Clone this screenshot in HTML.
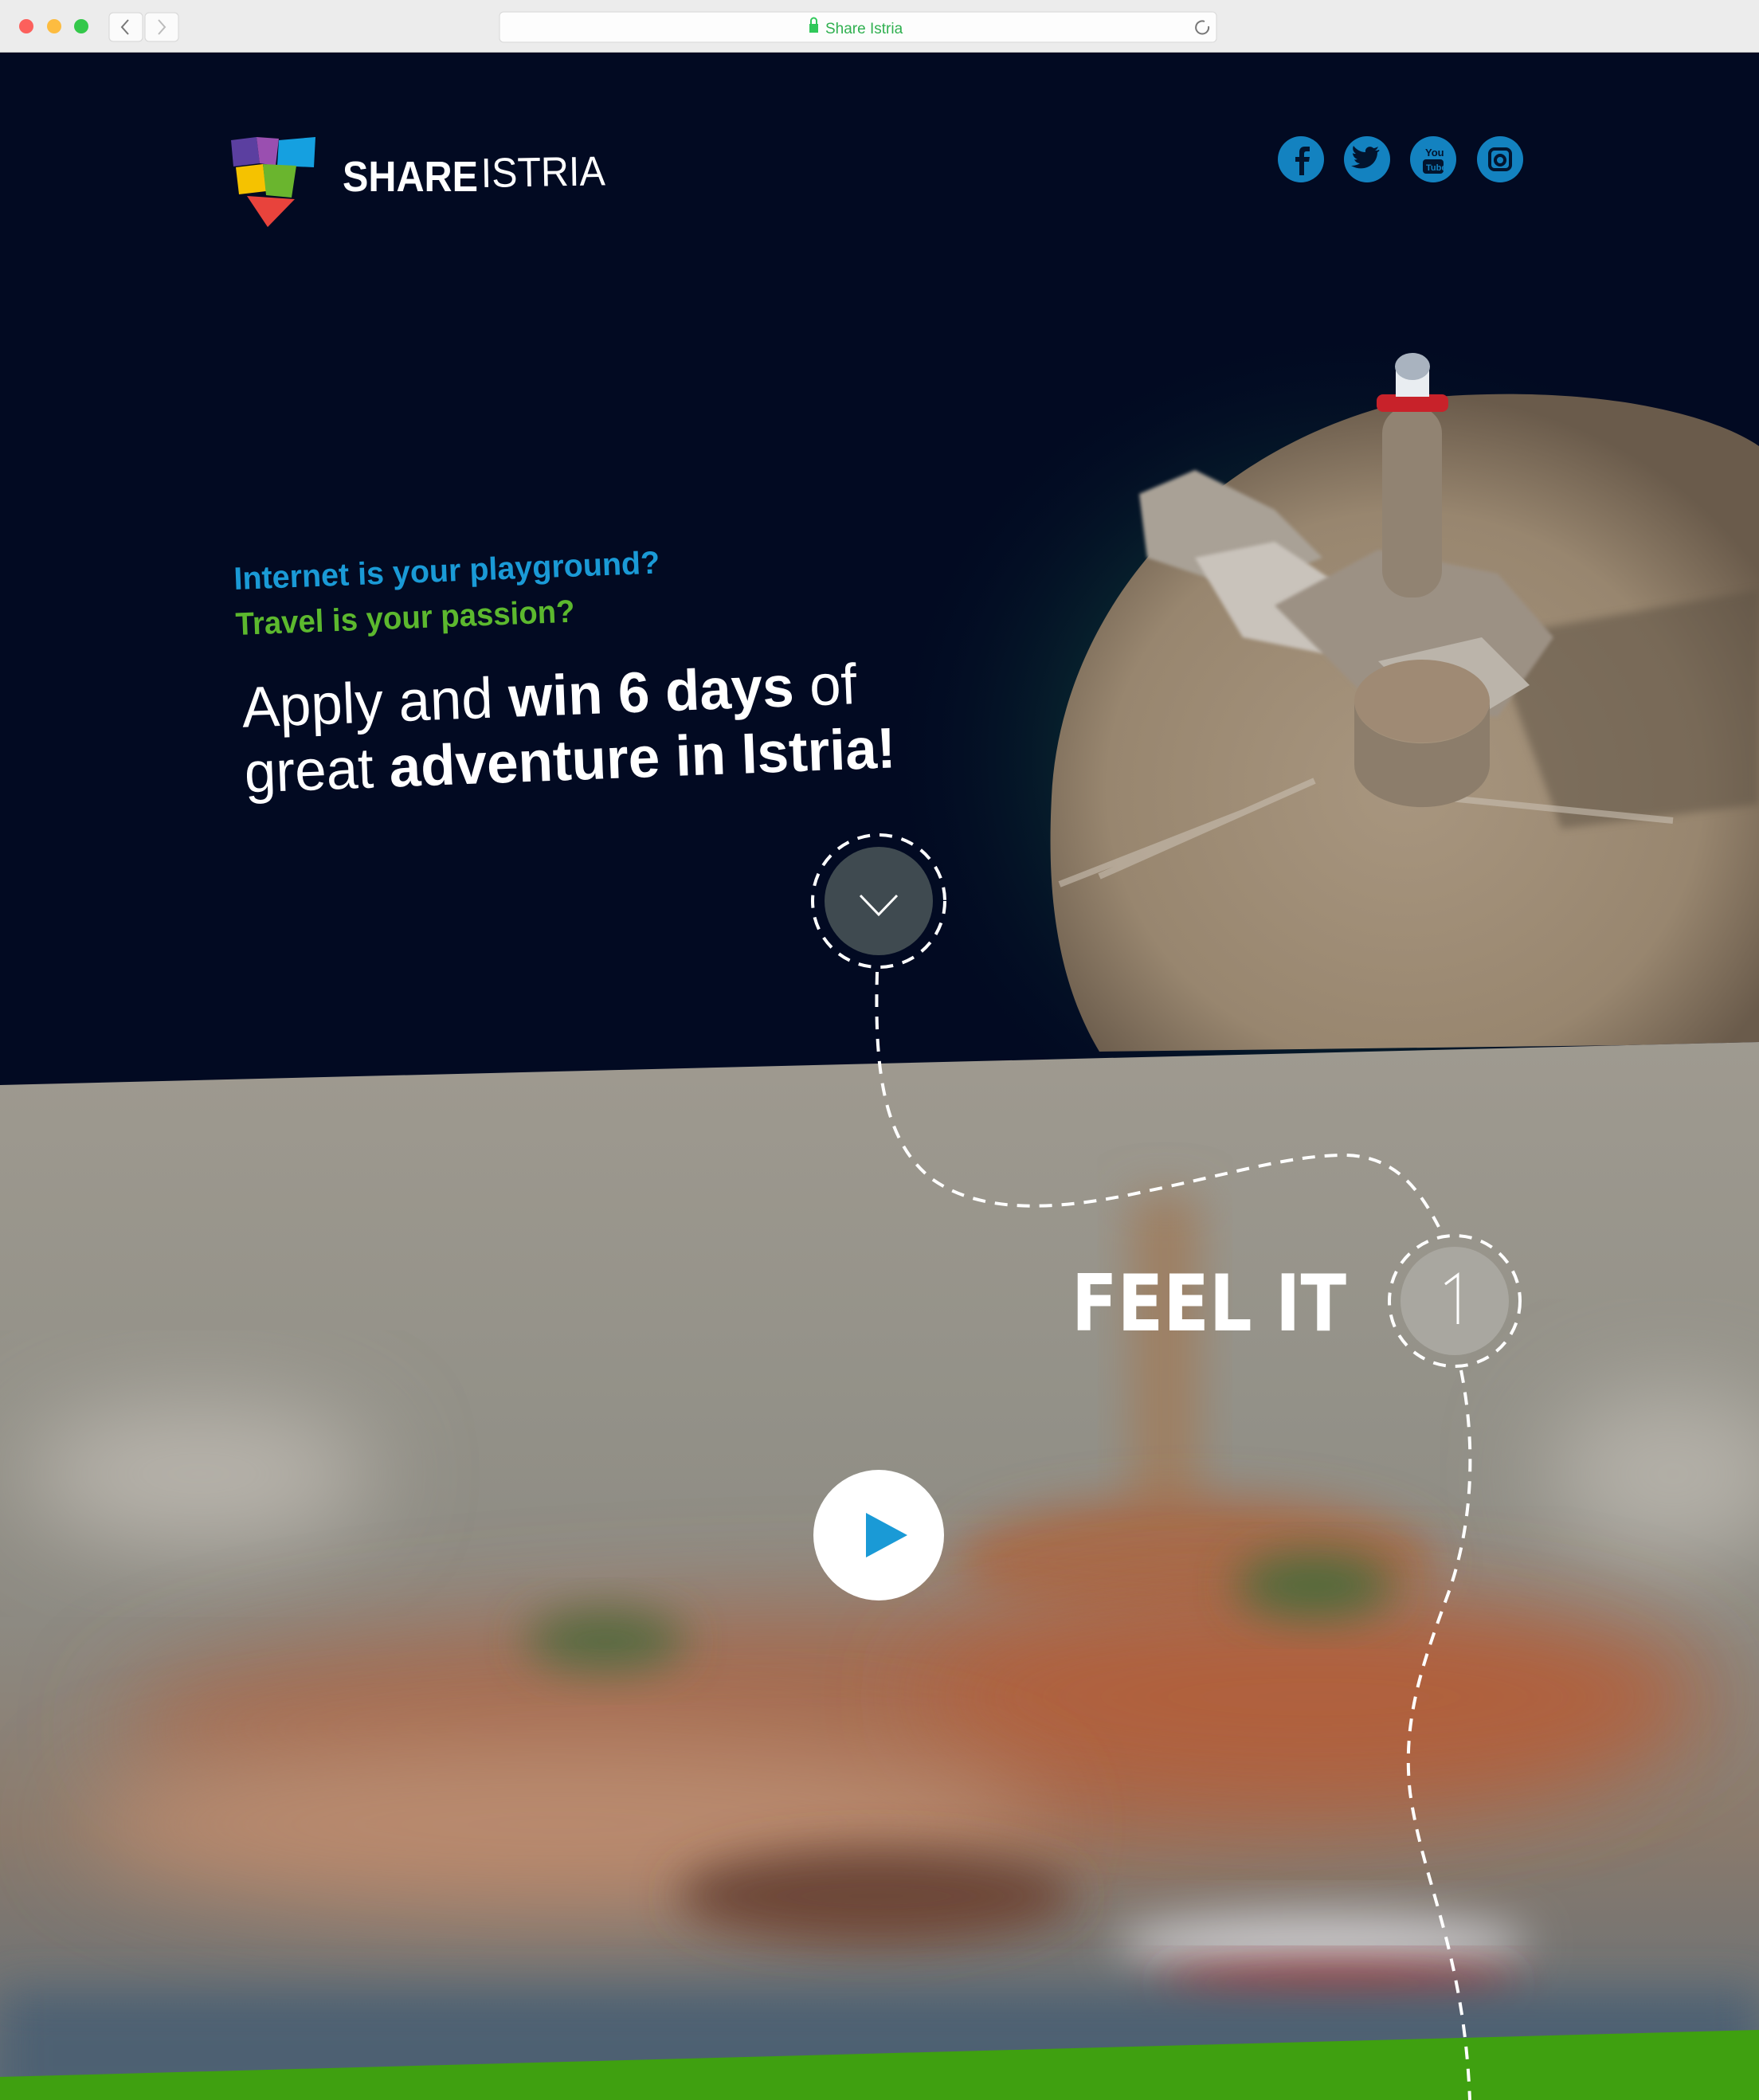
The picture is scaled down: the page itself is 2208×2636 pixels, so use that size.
<!DOCTYPE html>
<html><head><meta charset="utf-8"><style>
html,body{margin:0;padding:0;width:2208px;height:2636px;overflow:hidden;background:#020a22;font-family:"Liberation Sans",sans-serif}
svg{display:block}
</style></head><body>
<svg width="2208" height="2636" viewBox="0 0 2208 2636" xmlns="http://www.w3.org/2000/svg">
<defs>
<filter id="b80" x="-50%" y="-50%" width="200%" height="200%"><feGaussianBlur stdDeviation="60"/></filter>
<filter id="b30" x="-50%" y="-50%" width="200%" height="200%"><feGaussianBlur stdDeviation="28"/></filter>
<filter id="b6"><feGaussianBlur stdDeviation="5"/></filter>
<filter id="b3"><feGaussianBlur stdDeviation="2"/></filter>
<radialGradient id="glow" cx="0.5" cy="0.5" r="0.5"><stop offset="0" stop-color="#0c3a3a"/><stop offset="0.6" stop-color="#07202c"/><stop offset="1" stop-color="#020a22" stop-opacity="0"/></radialGradient>
<radialGradient id="isl" cx="0.5" cy="0.6" r="0.6"><stop offset="0" stop-color="#a8967f"/><stop offset="0.7" stop-color="#98866f"/><stop offset="1" stop-color="#6a5b4b"/></radialGradient>
<linearGradient id="low" x1="0" y1="0" x2="0" y2="1"><stop offset="0" stop-color="#9f9a90"/><stop offset="0.35" stop-color="#939188"/><stop offset="0.55" stop-color="#8d8a82"/><stop offset="0.75" stop-color="#8a7a6c"/><stop offset="1" stop-color="#5e6e7a"/></linearGradient>
<clipPath id="lowclip"><polygon points="0,1362 2208,1308 2208,2636 0,2636"/></clipPath>
<clipPath id="topclip"><polygon points="0,66 2208,66 2208,1308 0,1362"/></clipPath>
</defs>
<rect x="0" y="66" width="2208" height="1300" fill="#020a22"/>
<g clip-path="url(#topclip)">
<ellipse cx="1700" cy="950" rx="600" ry="550" fill="url(#glow)"/>
<path d="M1320,1000 C1330,780 1500,560 1780,500 C2000,480 2150,520 2208,560 L2208,1310 L1380,1320 C1320,1220 1315,1100 1320,1000Z" fill="url(#isl)"/>
<path d="M1870,800 L2208,740 L2208,1010 L1960,1040Z" fill="#5e5244" opacity="0.55" filter="url(#b6)"/>
<path d="M1380,1100 L1650,980 M1800,1000 L2100,1030 M1330,1110 L1560,1020" stroke="#c9bfb2" stroke-width="8" opacity="0.6"/>
<!-- buildings -->
<polygon points="1430,620 1500,590 1600,640 1660,700 1560,740 1440,700" fill="#a9a196" filter="url(#b3)"/>
<polygon points="1500,700 1600,680 1720,760 1660,820 1560,800" fill="#c9c3bb" filter="url(#b3)"/>
<polygon points="1600,760 1730,690 1880,720 1950,800 1880,900 1720,880" fill="#9c9184" filter="url(#b3)"/>
<polygon points="1730,830 1860,800 1920,860 1820,920" fill="#bbb4aa"/>
<path d="M1700,880 a80,50 0 0 0 170,0 l0,80 a80,50 0 0 1 -170,0z" fill="#8c7d6b"/>
<ellipse cx="1785" cy="880" rx="85" ry="52" fill="#9f8a74"/>
<rect x="1735" y="510" width="75" height="240" rx="34" fill="#918372"/>
<rect x="1728" y="495" width="90" height="22" rx="8" fill="#c8222a"/>
<rect x="1752" y="462" width="42" height="36" fill="#e9edf1"/>
<ellipse cx="1773" cy="460" rx="22" ry="17" fill="#a9b3bf"/>
</g>
<g clip-path="url(#lowclip)">
<rect x="0" y="1300" width="2208" height="1336" fill="url(#low)"/>
<ellipse cx="250" cy="1850" rx="220" ry="90" fill="#b8b4ac" filter="url(#b80)"/>
<ellipse cx="2100" cy="1850" rx="160" ry="110" fill="#b4b0a8" filter="url(#b80)"/>
<rect x="1420" y="1500" width="85" height="420" fill="#9e7f62" filter="url(#b30)"/>
<ellipse cx="1500" cy="1960" rx="300" ry="80" fill="#a66c4c" filter="url(#b30)"/>
<ellipse cx="1100" cy="2170" rx="950" ry="150" fill="#a46a50" filter="url(#b80)"/>
<ellipse cx="1650" cy="2130" rx="500" ry="120" fill="#b0603e" filter="url(#b80)"/>
<ellipse cx="760" cy="2060" rx="100" ry="40" fill="#556a3f" filter="url(#b30)"/>
<ellipse cx="1650" cy="1990" rx="100" ry="40" fill="#4e6a3a" filter="url(#b30)"/>
<ellipse cx="700" cy="2290" rx="600" ry="110" fill="#b98a6e" filter="url(#b80)"/>
<ellipse cx="1100" cy="2380" rx="250" ry="60" fill="#6d4638" filter="url(#b30)"/>
<ellipse cx="1660" cy="2440" rx="260" ry="40" fill="#c8c5c6" filter="url(#b30)"/>
<ellipse cx="1680" cy="2490" rx="230" ry="24" fill="#9a3334" filter="url(#b30)"/>
<rect x="0" y="2500" width="2208" height="160" fill="#4e6072" filter="url(#b30)"/>
</g>
<polygon points="0,2607 2208,2548 2208,2636 0,2636" fill="#3fa010"/>
<!-- browser chrome -->
<rect x="0" y="0" width="2208" height="66" fill="#ececec"/>
<rect x="0" y="65" width="2208" height="1" fill="#c8c8c8"/>
<circle cx="33" cy="33" r="9" fill="#fc605c"/><circle cx="68" cy="33" r="9" fill="#fdbc40"/><circle cx="102" cy="33" r="9" fill="#34c84a"/>
<rect x="137" y="16" width="42" height="36" rx="5" fill="#fbfbfb" stroke="#d6d6d6"/><rect x="182" y="16" width="42" height="36" rx="5" fill="#fbfbfb" stroke="#d6d6d6"/>
<path d="M161,25 L153,34 L161,43" stroke="#777" stroke-width="2" fill="none"/><path d="M199,25 L207,34 L199,43" stroke="#bbb" stroke-width="2" fill="none"/>
<rect x="627" y="15" width="900" height="38" rx="5" fill="#fdfdfd" stroke="#d8d8d8"/>
<rect x="1016" y="30" width="11" height="11" fill="#30c85a"/><path d="M1018,30 v-4 a3.5,3.5 0 0 1 7,0 v4" stroke="#30c85a" stroke-width="2" fill="none"/>
<text x="1036" y="42" font-size="19" fill="#30b050">Share Istria</text>
<path d="M1512,27 a8,8 0 1 0 5,6" stroke="#777" stroke-width="2" fill="none"/>
<!-- logo -->
<polygon points="290,176 322,172 326,205 293,209" fill="#5b3fa0"/>
<polygon points="322,172 350,174 346,208 326,205" fill="#9a4fb0"/>
<polygon points="350,176 396,172 394,210 348,208" fill="#15a0e0"/>
<polygon points="296,210 330,206 334,240 300,244" fill="#f5c200"/>
<polygon points="330,206 372,208 366,248 334,245" fill="#6ab52e"/>
<polygon points="310,246 370,250 336,285" fill="#e8433c"/>
<text x="430" y="240" font-size="54" font-weight="bold" fill="#fff" textLength="170" lengthAdjust="spacingAndGlyphs">SHARE</text>
<text x="604" y="235" font-size="52" fill="#fff" textLength="156" lengthAdjust="spacingAndGlyphs" transform="rotate(-1 604 235)">ISTRIA</text>
<g fill="#1382c0">
<circle cx="1633" cy="200" r="29"/><circle cx="1716" cy="200" r="29"/><circle cx="1799" cy="200" r="29"/><circle cx="1883" cy="200" r="29"/>
</g>
<g fill="#02142e">
<path d="M1637,220 v-17 h6 l1,-6 h-7 v-4 c0,-2 1,-3 3,-3 h4 v-6 h-6 c-5,0 -7,3 -7,7 v6 h-5 v6 h5 v17z"/>
<path d="M1731,188 c-2,1 -4,1 -5,1 c2,-1 3,-3 4,-5 c-2,1 -4,2 -6,2 c-4,-4 -11,-1 -10,5 c-7,0 -12,-4 -15,-8 c-2,4 0,8 3,10 c-2,0 -3,0 -4,-1 c0,4 3,7 6,8 c-1,0 -3,1 -4,0 c1,3 4,5 7,5 c-3,2 -7,3 -11,3 c16,9 33,-1 33,-17 c2,-1 3,-2 2,-3z"/>
<rect x="1786" y="200" width="26" height="18" rx="4"/>
<text x="1789" y="196" font-size="13" font-weight="bold" fill="#02142e">You</text>
<rect x="1870" y="187" width="26" height="26" rx="6" fill="none" stroke="#02142e" stroke-width="4"/>
<circle cx="1883" cy="201" r="6" fill="none" stroke="#02142e" stroke-width="4"/>
</g>
<text x="1790" y="214" font-size="11" font-weight="bold" fill="#1382c0">Tube</text>
<g transform="rotate(-2.2 294 740)">
<text x="294" y="740" font-size="40" font-weight="bold" fill="#1a9ad6" textLength="535" lengthAdjust="spacingAndGlyphs">Internet is your playground?</text>
<text x="294" y="797" font-size="40" font-weight="bold" fill="#5cb82e" textLength="426" lengthAdjust="spacingAndGlyphs">Travel is your passion?</text>
<text x="298" y="913" font-size="72" fill="#fff" textLength="772" lengthAdjust="spacingAndGlyphs">Apply and <tspan font-weight="bold">win 6 days</tspan> of</text>
<text x="298" y="995" font-size="72" fill="#fff" textLength="818" lengthAdjust="spacingAndGlyphs">great <tspan font-weight="bold">adventure in Istria!</tspan></text>
</g>
<g fill="none" stroke="#fff" stroke-width="4" stroke-dasharray="16 12">
<circle cx="1103" cy="1131" r="83"/>
<path d="M1101,1220 C1098,1330 1105,1430 1170,1480 C1240,1530 1350,1515 1440,1495 C1560,1470 1620,1450 1690,1450 C1750,1452 1780,1490 1806,1540"/>
<circle cx="1826" cy="1633" r="82"/>
<path d="M1834,1720 C1852,1810 1850,1910 1818,2000 C1785,2090 1760,2160 1770,2250 C1785,2360 1838,2450 1845,2636"/>
</g>
<circle cx="1103" cy="1131" r="68" fill="#4a5658" opacity="0.85"/>
<path d="M1080,1124 L1103,1148 L1126,1124" stroke="#fff" stroke-width="3" fill="none"/>
<circle cx="1826" cy="1633" r="68" fill="#a9a7a0"/>
<path d="M1814,1612 L1830,1600 L1830,1662" stroke="#fff" stroke-width="3" fill="none"/>
<text x="1345" y="1670" font-size="98" font-weight="900" fill="#fff" style="font-family:'DejaVu Sans',sans-serif" textLength="345" lengthAdjust="spacingAndGlyphs">FEEL IT</text>
<circle cx="1103" cy="1927" r="82" fill="#fff"/>
<polygon points="1087,1899 1087,1955 1139,1927" fill="#1a9ad6"/>
</svg>
</body></html>
